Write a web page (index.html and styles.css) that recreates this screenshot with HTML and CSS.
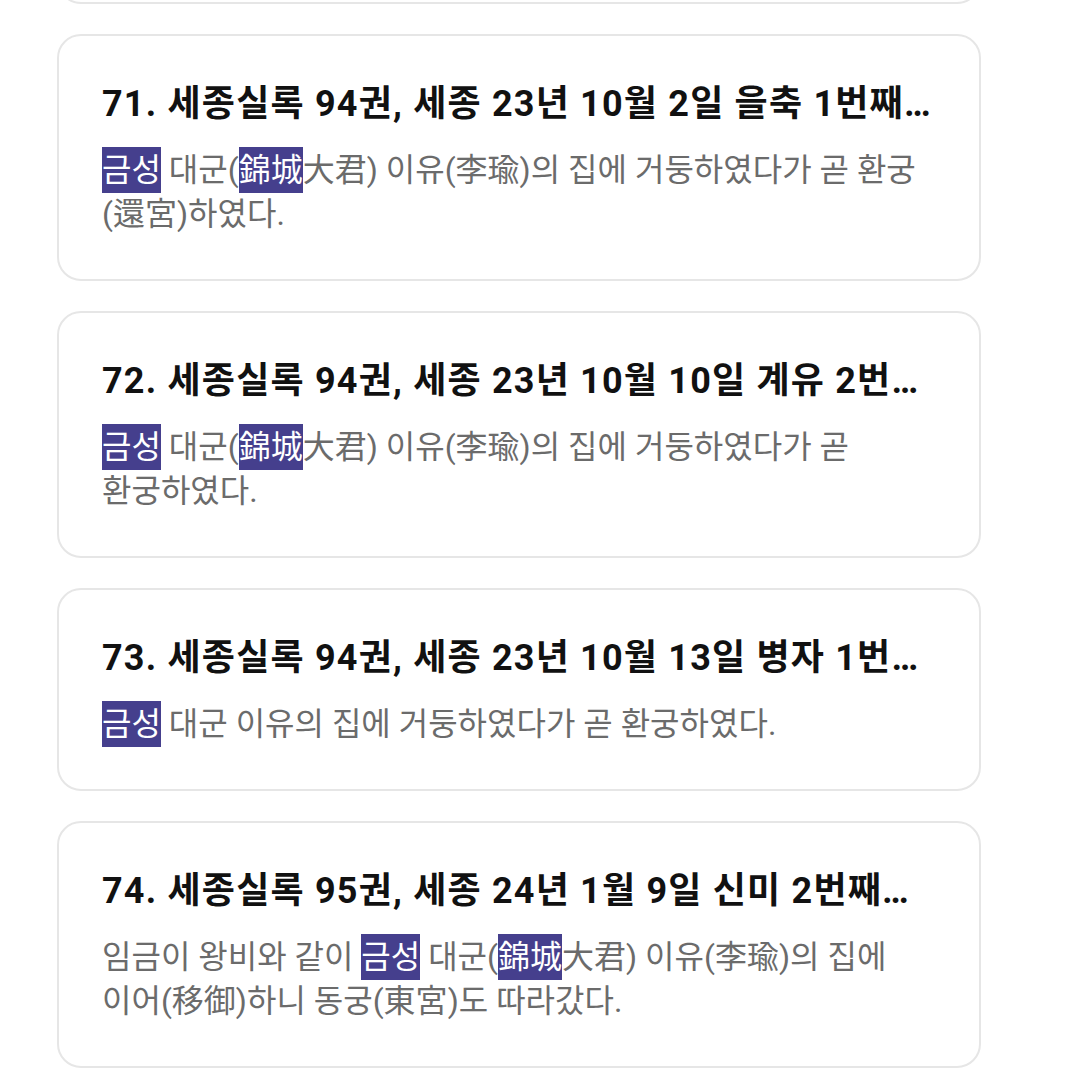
FILE: index.html
```html
<!DOCTYPE html>
<html lang="ko">
<head>
    <meta charset="UTF-8">
    <meta name="viewport" content="width=device-width, initial-scale=1.0">
    <title>검색 결과</title>
    <link rel="stylesheet" href="styles.css">
</head>
<body>
    <div class="result-list">
        <div class="result-card">
            <div class="result-title">70. 세종실록 93권, 세종 23년 7월 27일 임진 2번째기사 1441년 명 정통(正統) 6년</div>
            <div class="result-text"><span class="hl">금성</span> 대군(<span class="hl">錦城</span>大君) 이유(李瑜)의 집에 거둥하였다가 곧 환궁(還宮)하였다.</div>
        </div>

        <div class="result-card">
            <div class="result-title">71. 세종실록 94권, 세종 23년 10월 2일 을축 1번째기사 1441년 명 정통(正統) 6년</div>
            <div class="result-text"><span class="hl">금성</span> 대군(<span class="hl">錦城</span>大君) 이유(李瑜)의 집에 거둥하였다가 곧 환궁(還宮)하였다.</div>
        </div>

        <div class="result-card">
            <div class="result-title">72. 세종실록 94권, 세종 23년 10월 10일 계유 2번째기사 1441년 명 정통(正統) 6년</div>
            <div class="result-text"><span class="hl">금성</span> 대군(<span class="hl">錦城</span>大君) 이유(李瑜)의 집에 거둥하였다가 곧 환궁하였다.</div>
        </div>

        <div class="result-card">
            <div class="result-title">73. 세종실록 94권, 세종 23년 10월 13일 병자 1번째기사 1441년 명 정통(正統) 6년</div>
            <div class="result-text"><span class="hl">금성</span> 대군 이유의 집에 거둥하였다가 곧 환궁하였다.</div>
        </div>

        <div class="result-card">
            <div class="result-title">74. 세종실록 95권, 세종 24년 1월 9일 신미 2번째기사 1442년 명 정통(正統) 7년</div>
            <div class="result-text">임금이 왕비와 같이 <span class="hl">금성</span> 대군(<span class="hl">錦城</span>大君) 이유(李瑜)의 집에 이어(移御)하니 동궁(東宮)도 따라갔다.</div>
        </div>
    </div>
</body>
</html>
```

FILE: styles.css
```css
body {
    margin: 0;
    background: #ffffff;
    font-family: Roboto, "Noto Sans CJK KR", sans-serif;
    overflow: hidden;
}

.result-list {
    display: flex;
    flex-direction: column;
    gap: 30px;
    width: 924px;
    margin: -243px 0 0 57px;
}

.result-card {
    border: 2px solid #e6e6e6;
    border-radius: 24px;
    padding: 46px 43px 43px;
    background: #ffffff;
}

.result-title {
    font-size: 36px;
    line-height: 44px;
    font-weight: bold;
    letter-spacing: 1.2px;
    color: #111111;
    white-space: nowrap;
    overflow: hidden;
    text-overflow: ellipsis;
}

.result-text {
    margin-top: 22px;
    font-size: 32px;
    line-height: 44px;
    color: #6b6b6b;
    word-break: keep-all;
}

.hl {
    background: #453f8d;
    color: #ffffff;
    padding: 4px 0;
}
```
